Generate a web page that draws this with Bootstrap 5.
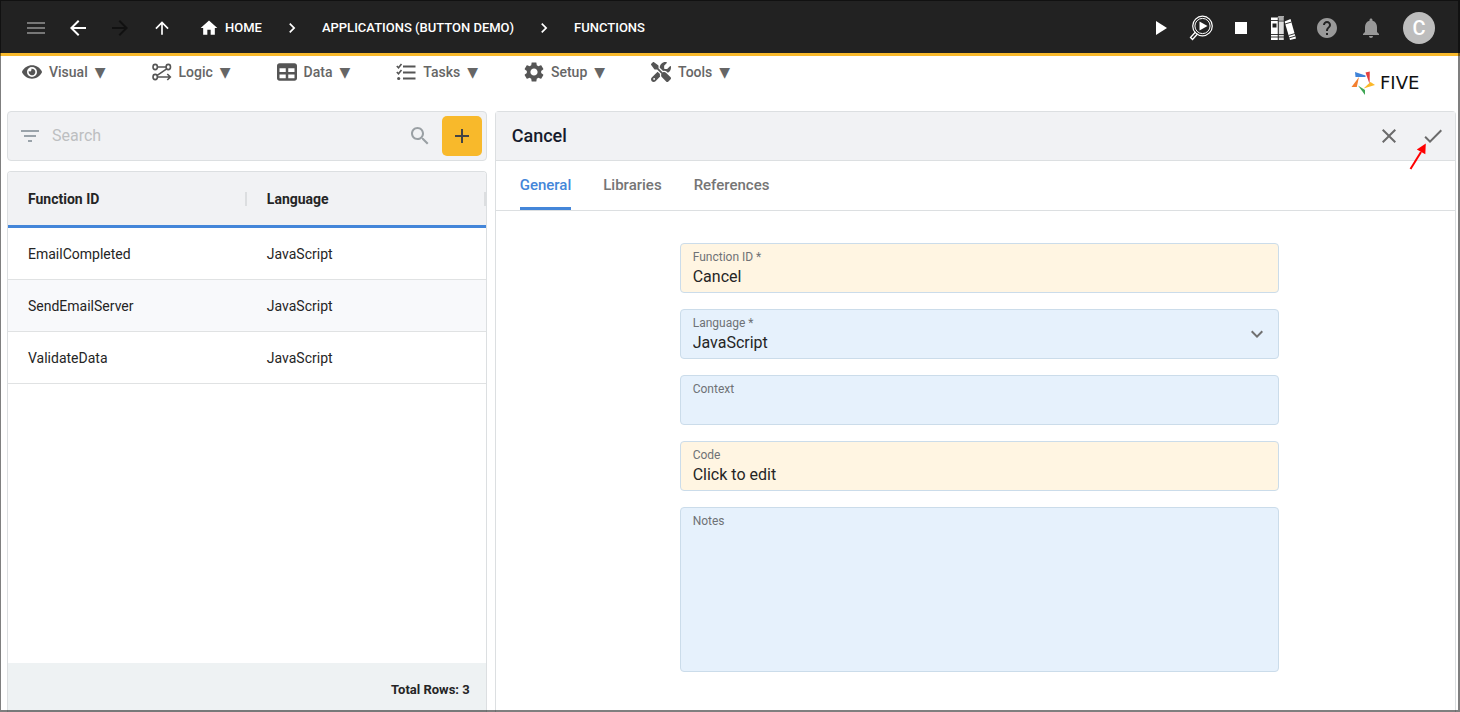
<!DOCTYPE html>
<html lang="en">
<head>
<meta charset="utf-8">
<meta name="viewport" content="width=device-width, initial-scale=1">
<title>Five - Functions</title>
<link href="https://cdn.jsdelivr.net/npm/bootstrap@5.3.0/dist/css/bootstrap.min.css" rel="stylesheet">
<style>
  :root { --line: #dcdfe1; --head: #f1f2f4; --accent: #4486d9; --amber: #f8b92b; }
  body { font-family: Roboto, "DejaVu Sans", sans-serif; font-size: 14px; line-height: 20px; color: #252525; min-height: 100vh; }
  button, input, select, textarea { font-family: inherit; }
  svg { display: block; flex: none; }
  /* thin window outline above everything */
  .window-edge { position: fixed; inset: 0; border: solid rgba(0,0,0,.5); border-width: 1px 2px 2px 1px; pointer-events: none; z-index: 50; }
  .topbar { background: #222; border-bottom: 3px solid var(--amber); height: 56px; padding: 3px 25px 0 15px; color: #fff; }
  .bare { border: 0; background: none; padding: 0; color: inherit; display: flex; align-items: center; justify-content: center; }
  .nav-ico { width: 42px; height: 40px; }
  .tool-ico { width: 40px; height: 40px; }
  .tool-wide { width: 44px; height: 40px; }
  .crumbs { font-size: 13px; font-weight: 500; margin-left: 16px; }
  .crumbs a { color: #fff; text-decoration: none; gap: 6px; }
  .avatar { width: 32px; height: 32px; border-radius: 50%; background: #bdbdbd; color: #fff; font-size: 20px; font-weight: 500; margin-left: 10px; }
  .menubar { min-height: 55px; padding: 4px 21px 0 22px; }
  .menus { gap: 46px; }
  .menus button { height: 24px; gap: 7px; color: #666; font-size: 14px; font-weight: 500; }
  .menus svg { color: #555; }
  .brand { margin-top: 10px; width: 88px; gap: 5px; color: #111; text-decoration: none; font: 18px/26px "DejaVu Sans", sans-serif; }
  .workspace { padding: 0 4px 0 7px; gap: 8px; }
  .side { flex: 1 1 0; gap: 10px; }
  .detail { flex: 2 1 0; border: 1px solid var(--line); border-bottom: 0; border-radius: 4px 4px 0 0; }
  .finder { height: 50px; background: var(--head); border: 1px solid var(--line); border-radius: 4px; padding: 0 4px 0 10px; }
  .finder input { border: 0; background: none; outline: 0; font-size: 16px; min-width: 0; margin-left: 10px; padding: 0; }
  .finder input::placeholder { color: #bdbfc1; }
  .finder .go { width: 44px; height: 40px; }
  .add { width: 40px; height: 40px; background: var(--amber); border-radius: 5px; color: #444; }
  .listing { border: 1px solid var(--line); border-bottom: 0; border-radius: 4px 4px 0 0; overflow: hidden; }
  .listing table { width: 100%; table-layout: fixed; border-collapse: separate; border-spacing: 0; }
  .listing th { height: 56px; background: var(--head); border-bottom: 3px solid var(--accent); padding: 0 20px; font-weight: 700; }
  .listing th div { display: flex; justify-content: space-between; align-items: center; margin-right: -20px; }
  .listing th div::after { content: ""; width: 2px; height: 14px; background: #dcdee0; }
  .listing td { height: 52px; border-bottom: 1px solid #e0e2e3; padding: 0 20px; }
  .listing tbody tr:nth-child(even) { background: #f8f9fb; }
  .total { height: 49px; background: #eef2f3; padding: 4px 16px 0 0; font-size: 13px; font-weight: 700; }
  .detail-head { height: 49px; background: var(--head); border-bottom: 1px solid var(--line); padding: 0 0 0 16px; color: #6b6b6b; }
  .detail-head h1 { font-size: 18px; line-height: 24px; font-weight: 500; color: #161b2c; }
  .pointer { position: absolute; left: 0; top: 24px; }
  .tabs { height: 50px; border-bottom: 1px solid var(--line); padding-left: 24px; gap: 32px; }
  .tabs button { font-size: 15px; font-weight: 500; color: #757575; padding-top: 2px; border-bottom: 3px solid transparent; }
  .tabs .on { color: var(--accent); border-color: var(--accent); }
  .sheet { padding: 32px 0 40px 8px; }
  .fields { width: 63%; gap: 16px; }
  .box { background: #e6f1fc; border: 1px solid #cbdcea; border-radius: 4px; padding: 5px 12px 0; min-height: 50px; position: relative; }
  .box.warm { background: #fff5e2; }
  .box label { display: block; font-size: 12px; line-height: 16px; color: #6f7276; }
  .box input, .box select, .box textarea { display: block; width: 100%; height: 24px; border: 0; outline: 0; background: none; padding: 0; font-size: 16px; line-height: 24px; color: #252525; appearance: none; resize: none; }
  .box textarea { height: 142px; }
  .box .caret { position: absolute; right: 9px; top: 12px; pointer-events: none; color: #707070; }
</style>
</head>
<body class="d-flex flex-column bg-white">
<div class="window-edge"></div>

<header class="topbar d-flex align-items-center">
  <button class="bare nav-ico" aria-label="Menu"><svg width="24" height="24" viewBox="0 0 24 24" fill="#777"><path d="M3 18h18v-2H3v2zm0-5h18v-2H3v2zm0-7v2h18V6H3z"/></svg></button>
  <button class="bare nav-ico" aria-label="Back"><svg width="24" height="24" viewBox="0 0 24 24" fill="currentColor"><path d="M20 11H7.830l5.590-5.590L12 4l-8 8 8 8 1.410-1.410L7.830 13H20v-2z"/></svg></button>
  <button class="bare nav-ico" aria-label="Forward"><svg width="24" height="24" viewBox="0 0 24 24" fill="#111"><path d="M12 4l-1.410 1.410L16.170 11H4v2h12.170l-5.580 5.590L12 20l8-8z"/></svg></button>
  <button class="bare nav-ico" aria-label="Up"><svg width="20" height="20" viewBox="0 0 24 24" fill="currentColor"><path d="M4 12l1.410 1.410L11 7.830V20h2V7.830l5.580 5.590L20 12l-8-8-8 8z"/></svg></button>
  <nav class="crumbs d-flex align-items-center flex-grow-1" aria-label="Breadcrumb">
    <a href="#" class="d-flex align-items-center"><svg width="20" height="20" viewBox="0 0 24 24" fill="currentColor"><path d="M10 20v-6h4v6h5v-8h3L12 3 2 12h3v8z"/></svg>HOME</a>
    <svg class="mx-4" width="12" height="20" viewBox="5 0 14 24" fill="currentColor"><path d="M10 6L8.590 7.410 13.170 12l-4.580 4.590L10 18l6-6z"/></svg>
    <a href="#">APPLICATIONS (BUTTON DEMO)</a>
    <svg class="mx-4" width="12" height="20" viewBox="5 0 14 24" fill="currentColor"><path d="M10 6L8.590 7.410 13.170 12l-4.580 4.590L10 18l6-6z"/></svg>
    <a href="#">FUNCTIONS</a>
  </nav>
  <button class="bare tool-ico" aria-label="Run"><svg width="12" height="14" viewBox="0 0 12 14" fill="currentColor"><path d="M1 0L12 7L1 14z"/></svg></button>
  <button class="bare tool-ico" aria-label="Inspect"><svg width="24" height="26" viewBox="0 0 24 26" fill="none" stroke="#fff"><circle cx="13.500" cy="11" r="9.800" stroke-width="1.200"/><circle cx="13.500" cy="11" r="7.600" stroke-width="1"/><path d="M6.500 17l-5 5.500 2 2L8.500 19" stroke-width="1.300"/><path d="M10.500 6.500v9l8-4.500z" fill="#fff" stroke="none"/></svg></button>
  <button class="bare tool-ico" aria-label="Stop"><svg width="12" height="12"><rect width="12" height="12" fill="#fff"/></svg></button>
  <button class="bare tool-wide" aria-label="Documentation"><svg width="25" height="25" viewBox="0 0 25 25"><path d="M0 1.500h7V24H0z" fill="#fff"/><path d="M7.500 0H13v24H7.500z" fill="#ddd"/><path d="M7.500 0H13v4H7.500z" fill="#aaa"/><path d="M13.500 5.500l6-2.500 5.500 19.500-6 1.500z" fill="#fff"/><path d="M1.500 7.500h4v4h-4z" fill="#222"/><path d="M0 4.500h7M0 18.500h13M0 21h13M7.500 5h5.500M14 8l6.500-2M17.500 19.500l6.500-2M18 22l6.500-2" stroke="#222" stroke-width=".9"/><path d="M7.200 2v22M13.200 1v23" stroke="#222" stroke-width=".8"/></svg></button>
  <button class="bare tool-wide" aria-label="Help"><svg width="24" height="24" viewBox="0 0 24 24" fill="#999"><path d="M12 2C6.480 2 2 6.480 2 12s4.480 10 10 10 10-4.480 10-10S17.520 2 12 2zm1 17h-2v-2h2v2zm2.070-7.750l-.9.920C13.450 12.900 13 13.500 13 15h-2v-.5c0-1.100.45-2.100 1.170-2.830l1.240-1.260c.37-.36.590-.860.590-1.410 0-1.100-.9-2-2-2s-2 .9-2 2H8c0-2.210 1.790-4 4-4s4 1.790 4 4c0 .880-.360 1.680-.930 2.250z"/></svg></button>
  <button class="bare tool-wide" aria-label="Notifications"><svg width="24" height="24" viewBox="0 0 24 24" fill="#999"><path d="M12 22c1.100 0 2-.9 2-2h-4c0 1.100.89 2 2 2zm6-6v-5c0-3.070-1.640-5.640-4.500-6.320V4c0-.83-.67-1.500-1.500-1.500s-1.500.67-1.500 1.500v.68C7.630 5.360 6 7.920 6 11v5l-2 2v1h16v-1l-2-2z"/></svg></button>
  <button class="bare avatar" aria-label="Account">C</button>
</header>

<div class="menubar d-flex align-items-start justify-content-between">
  <nav class="menus d-flex" aria-label="Main">
    <button class="bare"><svg width="20" height="18" viewBox="0 0 576 512" fill="currentColor"><path d="M572.520 241.400C518.290 135.590 410.930 64 288 64S57.680 135.640 3.480 241.410a32.350 32.350 0 0 0 0 29.190C57.710 376.410 165.070 448 288 448s230.320-71.640 284.520-177.410a32.350 32.350 0 0 0 0-29.190zM288 400a144 144 0 1 1 144-144 143.930 143.930 0 0 1-144 144zm0-240a95.310 95.310 0 0 0-25.310 3.790 47.850 47.850 0 0 1-66.900 66.900A95.780 95.780 0 1 0 288 160z"/></svg><span>Visual</span><span>▼</span></button>
    <button class="bare"><svg width="20" height="18" viewBox="0 0 20 18" fill="none" stroke="currentColor" stroke-width="1.600"><ellipse cx="3.200" cy="4" rx="2.200" ry="2.600"/><ellipse cx="16.300" cy="4" rx="2.200" ry="2.600"/><ellipse cx="3.200" cy="14" rx="2.200" ry="2.600"/><path d="M5.500 4H14M14.700 5.800L5.200 12.300M5.500 14H18M15.300 11l3 3-3 3"/></svg><span>Logic</span><span>▼</span></button>
    <button class="bare"><svg width="20" height="20" viewBox="0 0 512 512" fill="currentColor"><path d="M64 256V160H224v96H64zm0 64H224v96H64V320zm224 96V320H448v96H288zM448 256H288V160H448v96zM64 32C28.700 32 0 60.700 0 96V416c0 35.300 28.700 64 64 64H448c35.300 0 64-28.700 64-64V96c0-35.300-28.700-64-64-64H64z"/></svg><span>Data</span><span>▼</span></button>
    <button class="bare"><svg width="20" height="18" viewBox="0 0 20 18" fill="none" stroke="currentColor"><path d="M7 3.500h12.500M7 9.500h12.500M7 15.500h12.500" stroke-width="1.800"/><path d="M.8 3l1.700 1.700L5.500 1M.8 9l1.700 1.700L5.500 7" stroke-width="1.600"/><circle cx="2.700" cy="15.500" r="1.600" fill="currentColor" stroke="none"/></svg><span>Tasks</span><span>▼</span></button>
    <button class="bare"><svg width="20" height="20" viewBox="2 2 20 20" fill="currentColor"><path d="M19.140 12.940c.04-.3.060-.61.060-.94 0-.32-.02-.64-.07-.94l2.030-1.580c.18-.14.230-.41.120-.61l-1.920-3.320c-.12-.22-.37-.29-.59-.22l-2.390.960c-.5-.38-1.030-.7-1.620-.94l-.36-2.540c-.04-.24-.24-.41-.48-.41h-3.840c-.24 0-.43.170-.47.410l-.36 2.540c-.59.240-1.130.570-1.620.940l-2.390-.96c-.22-.08-.47 0-.59.220L2.740 8.870c-.12.210-.08.470.120.610l2.030 1.580c-.05.300-.09.630-.09.940s.02.640.070.940l-2.030 1.580c-.18.140-.23.410-.12.610l1.920 3.320c.12.220.370.290.590.220l2.390-.96c.5.380 1.030.7 1.620.940l.36 2.540c.05.240.240.410.480.410h3.840c.24 0 .44-.17.470-.41l.36-2.540c.59-.24 1.130-.56 1.620-.94l2.390.960c.22.080.470 0 .59-.22l1.920-3.320c.12-.22.070-.47-.12-.61l-2.010-1.580zM12 15.600c-1.980 0-3.600-1.620-3.600-3.600s1.620-3.600 3.600-3.600 3.600 1.620 3.600 3.600-1.620 3.600-3.600 3.600z"/></svg><span>Setup</span><span>▼</span></button>
    <button class="bare"><svg width="20" height="20" viewBox="0 0 512 512" fill="currentColor"><path d="M78.600 5C69.100-2.400 55.600-1.500 47 7L7 47c-8.500 8.500-9.400 22-2.100 31.600l80 104c4.500 5.900 11.600 9.400 19 9.400h54.100l109 109c-14.700 29-10 65.400 14.300 89.600l112 112c12.500 12.500 32.800 12.500 45.300 0l64-64c12.500-12.500 12.500-32.800 0-45.300l-112-112c-24.200-24.200-60.600-29-89.600-14.300l-109-109V104c0-7.500-3.500-14.500-9.400-19L78.600 5zM19.900 396.100C7.200 408.800 0 426.100 0 444.100C0 481.600 30.400 512 67.900 512c18 0 35.300-7.200 48-19.900L233.700 374.300c-7.800-20.900-9-43.600-3.600-65.100l-61.700-61.700L19.900 396.100zM512 144c0-10.500-1.100-20.700-3.200-30.500c-2.400-11.200-16.100-14.100-24.200-6l-63.900 63.900c-3 3-7.100 4.700-11.300 4.700H352c-8.800 0-16-7.200-16-16V102.600c0-4.200 1.700-8.300 4.700-11.300l63.900-63.900c8.100-8.100 5.200-21.800-6-24.200C388.700 1.100 378.500 0 368 0C288.500 0 224 64.500 224 144l0 .8 85.300 85.300c36-9.100 75.800 .5 104 28.700L429 274.500c49-23 83-72.800 83-130.500zM56 432a24 24 0 1 1 48 0 24 24 0 1 1 -48 0z"/></svg><span>Tools</span><span>▼</span></button>
  </nav>
  <a href="#" class="brand d-flex align-items-center"><svg width="24" height="24" viewBox="0 0 24 24"><path fill="#3f83d8" d="M4 1L14.500 4.500v1.500H4.500z"/><path fill="#e2403f" d="M14.500 1.500L18.800 .5 18.600 13z"/><path fill="#fbb829" d="M12.500 17.500L19.500 11l4.500 3z"/><path fill="#3fa655" d="M7 14.500L14 19v5z"/><path fill="#f37f2f" d="M8 6L5.800 16 .5 16z"/></svg>FIVE</a>
</div>

<main class="workspace d-flex flex-grow-1">
  <section class="side d-flex flex-column">
    <form class="finder d-flex align-items-center" role="search">
      <svg width="24" height="24" viewBox="0 0 24 24" fill="#9aa3aa"><path d="M10 18h4v-2h-4v2zM3 6v2h18V6H3zm3 7h12v-2H6v2z"/></svg>
      <input class="flex-grow-1" type="search" placeholder="Search" aria-label="Search">
      <button type="button" class="bare go" aria-label="Search"><svg width="24" height="24" viewBox="0 0 24 24" fill="#9aa0a4"><path d="M15.500 14h-.79l-.28-.27C15.410 12.590 16 11.110 16 9.500 16 5.910 13.090 3 9.500 3S3 5.910 3 9.500 5.910 16 9.500 16c1.610 0 3.090-.59 4.230-1.570l.27.280v.79l5 4.990L20.490 19l-4.990-5zm-6 0C7.010 14 5 11.990 5 9.500S7.010 5 9.500 5 14 7.010 14 9.500 11.990 14 9.500 14z"/></svg></button>
      <button type="button" class="bare add" aria-label="Add"><svg width="24" height="24" viewBox="0 0 24 24" fill="currentColor"><path d="M19 13h-6v6h-2v-6H5v-2h6V5h2v6h6v2z"/></svg></button>
    </form>
    <div class="listing d-flex flex-column flex-grow-1">
      <table>
        <thead><tr><th scope="col"><div>Function ID</div></th><th scope="col"><div>Language</div></th></tr></thead>
        <tbody>
          <tr><td>EmailCompleted</td><td>JavaScript</td></tr>
          <tr><td>SendEmailServer</td><td>JavaScript</td></tr>
          <tr><td>ValidateData</td><td>JavaScript</td></tr>
        </tbody>
      </table>
      <div class="total d-flex align-items-center justify-content-end mt-auto">Total Rows: 3</div>
    </div>
  </section>

  <section class="detail">
    <div class="detail-head d-flex align-items-center">
      <h1 class="m-0 flex-grow-1">Cancel</h1>
      <button class="bare tool-wide" aria-label="Close"><svg width="24" height="24" viewBox="0 0 24 24" fill="currentColor"><path d="M19 6.410L17.590 5 12 10.590 6.410 5 5 6.410 10.590 12 5 17.590 6.410 19 12 13.410 17.590 19 19 17.590 13.410 12z"/></svg></button>
      <button class="bare tool-wide position-relative" aria-label="Save"><svg width="24" height="24" viewBox="0 0 24 24" fill="currentColor"><path d="M9 16.170L4.830 12l-1.420 1.410L9 19 21 7l-1.410-1.410z"/></svg>
        <svg class="pointer overflow-visible" width="20" height="32" viewBox="0 0 20 32"><path d="M-.5 29L10 12" stroke="#f00" stroke-width="2"/><path d="M14.800 3.500L5.800 9.500l8.500 4.700z" fill="#f00"/></svg></button>
    </div>
    <div class="tabs d-flex" role="tablist">
      <button class="bare on" role="tab" aria-selected="true">General</button>
      <button class="bare" role="tab" aria-selected="false">Libraries</button>
      <button class="bare" role="tab" aria-selected="false">References</button>
    </div>
    <div class="sheet">
      <form class="fields d-flex flex-column mx-auto">
        <div class="box warm"><label for="fid">Function ID *</label><input id="fid" value="Cancel"></div>
        <div class="box"><label for="lang">Language *</label><select id="lang"><option>JavaScript</option></select><svg class="caret" width="24" height="24" viewBox="0 0 24 24" fill="currentColor"><path d="M7.410 8.590L12 13.170l4.590-4.580L18 10l-6 6-6-6z"/></svg></div>
        <div class="box"><label for="ctx">Context</label><input id="ctx"></div>
        <div class="box warm"><label for="code">Code</label><input id="code" value="Click to edit" readonly></div>
        <div class="box"><label for="notes">Notes</label><textarea id="notes"></textarea></div>
      </form>
    </div>
  </section>
</main>
<script src="https://cdn.jsdelivr.net/npm/bootstrap@5.3.0/dist/js/bootstrap.bundle.min.js"></script>
</body>
</html>
